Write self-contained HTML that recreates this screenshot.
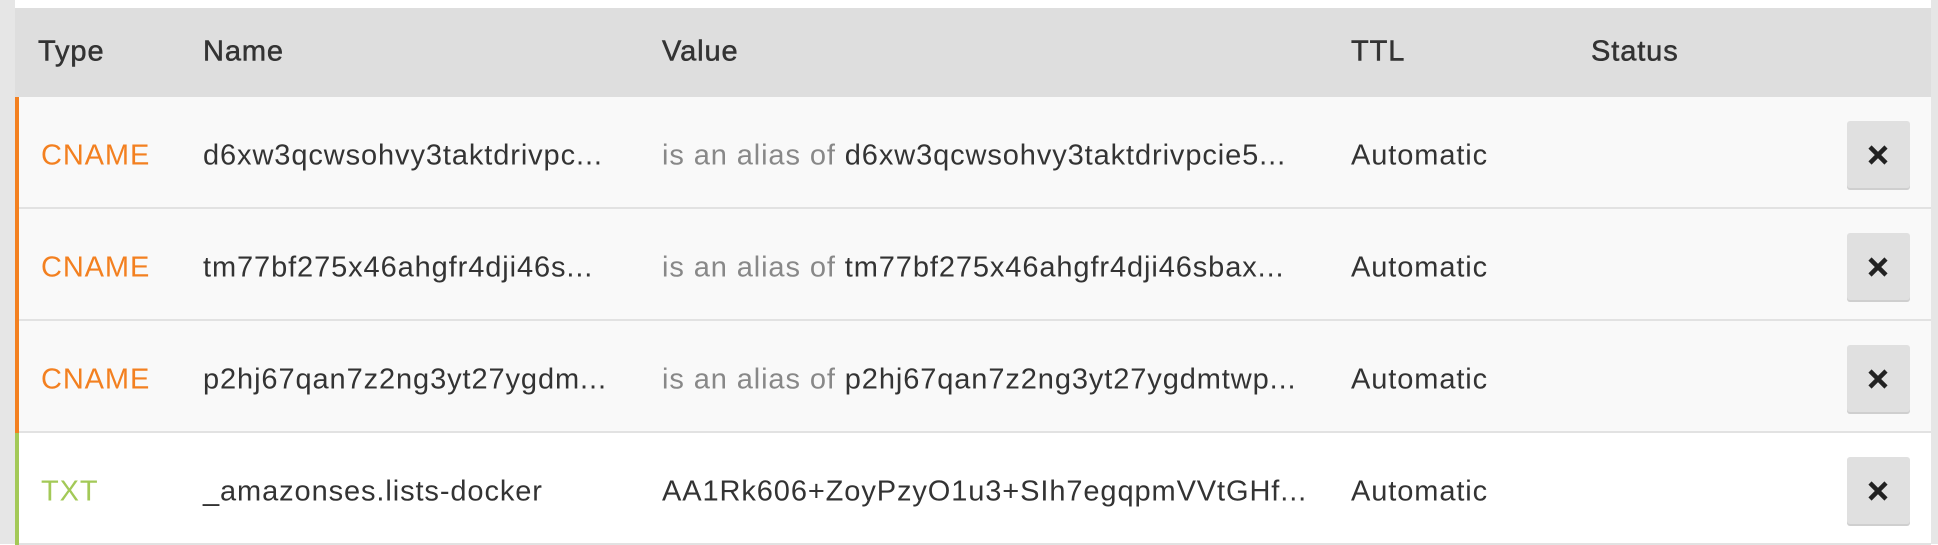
<!DOCTYPE html>
<html><head><meta charset="utf-8"><style>
*{margin:0;padding:0;box-sizing:border-box}
body{width:1938px;height:544px;background:#fff;position:relative;overflow:hidden;font-family:"Liberation Sans",sans-serif;font-size:29px;letter-spacing:0.9px;color:#333}
.ls{position:absolute;left:0;top:0;width:15px;height:544px;background:#e6e6e6}
.rs{position:absolute;right:0;top:0;width:7px;height:544px;background:#e6e6e6}
.hdr{position:absolute;left:15px;right:7px;top:8px;height:89px;background:#dedede}
.hdr .t{-webkit-text-stroke:0.5px #333;margin-top:-1px}
.row{position:absolute;left:15px;right:7px;height:112px;border-bottom:2px solid #e2e2e2;background:#f9f9f9}
.row.w{background:#fff}
.t{position:absolute;top:50%;transform:translateY(-50%);white-space:nowrap}
.row .t{margin-top:4px}
.b{position:absolute;left:0;top:0;bottom:-2px;width:4px}
.btn{position:absolute;left:1832px;top:24px;width:63px;height:67px;background:#e0e0e0;border-radius:3px;box-shadow:0 2px 0 #cfcfcf}
.btn svg{position:absolute;left:20px;top:23px}
.g{color:#888}
</style></head><body>
<div class="ls"></div><div class="rs"></div>
<div class="hdr">
<span class="t" style="left:23px">Type</span>
<span class="t" style="left:188px">Name</span>
<span class="t" style="left:647px">Value</span>
<span class="t" style="left:1336px">TTL</span>
<span class="t" style="left:1576px">Status</span>
</div>

<div class="row" style="top:97px"><div class="b" style="background:#f38020"></div>
<span class="t" style="left:26px;color:#f38020">CNAME</span>
<span class="t" style="left:188px">d6xw3qcwsohvy3taktdrivpc...</span>
<span class="t" style="left:647px"><span class="g">is an alias of </span>d6xw3qcwsohvy3taktdrivpcie5...</span>
<span class="t" style="left:1336px">Automatic</span>
<div class="btn"><svg width="22" height="22" viewBox="0 0 22 22"><path d="M3 3L19 19M19 3L3 19" stroke="#222" stroke-width="4.5"/></svg></div></div>

<div class="row" style="top:209px"><div class="b" style="background:#f38020"></div>
<span class="t" style="left:26px;color:#f38020">CNAME</span>
<span class="t" style="left:188px">tm77bf275x46ahgfr4dji46s...</span>
<span class="t" style="left:647px"><span class="g">is an alias of </span>tm77bf275x46ahgfr4dji46sbax...</span>
<span class="t" style="left:1336px">Automatic</span>
<div class="btn"><svg width="22" height="22" viewBox="0 0 22 22"><path d="M3 3L19 19M19 3L3 19" stroke="#222" stroke-width="4.5"/></svg></div></div>

<div class="row" style="top:321px"><div class="b" style="background:#f38020"></div>
<span class="t" style="left:26px;color:#f38020">CNAME</span>
<span class="t" style="left:188px">p2hj67qan7z2ng3yt27ygdm...</span>
<span class="t" style="left:647px"><span class="g">is an alias of </span>p2hj67qan7z2ng3yt27ygdmtwp...</span>
<span class="t" style="left:1336px">Automatic</span>
<div class="btn"><svg width="22" height="22" viewBox="0 0 22 22"><path d="M3 3L19 19M19 3L3 19" stroke="#222" stroke-width="4.5"/></svg></div></div>

<div class="row w" style="top:433px"><div class="b" style="background:#a3c957"></div>
<span class="t" style="left:26px;color:#a3c957">TXT</span>
<span class="t" style="left:188px">_amazonses.lists-docker</span>
<span class="t" style="left:647px">AA1Rk606+ZoyPzyO1u3+SIh7egqpmVVtGHf...</span>
<span class="t" style="left:1336px">Automatic</span>
<div class="btn"><svg width="22" height="22" viewBox="0 0 22 22"><path d="M3 3L19 19M19 3L3 19" stroke="#222" stroke-width="4.5"/></svg></div></div>
</body></html>
